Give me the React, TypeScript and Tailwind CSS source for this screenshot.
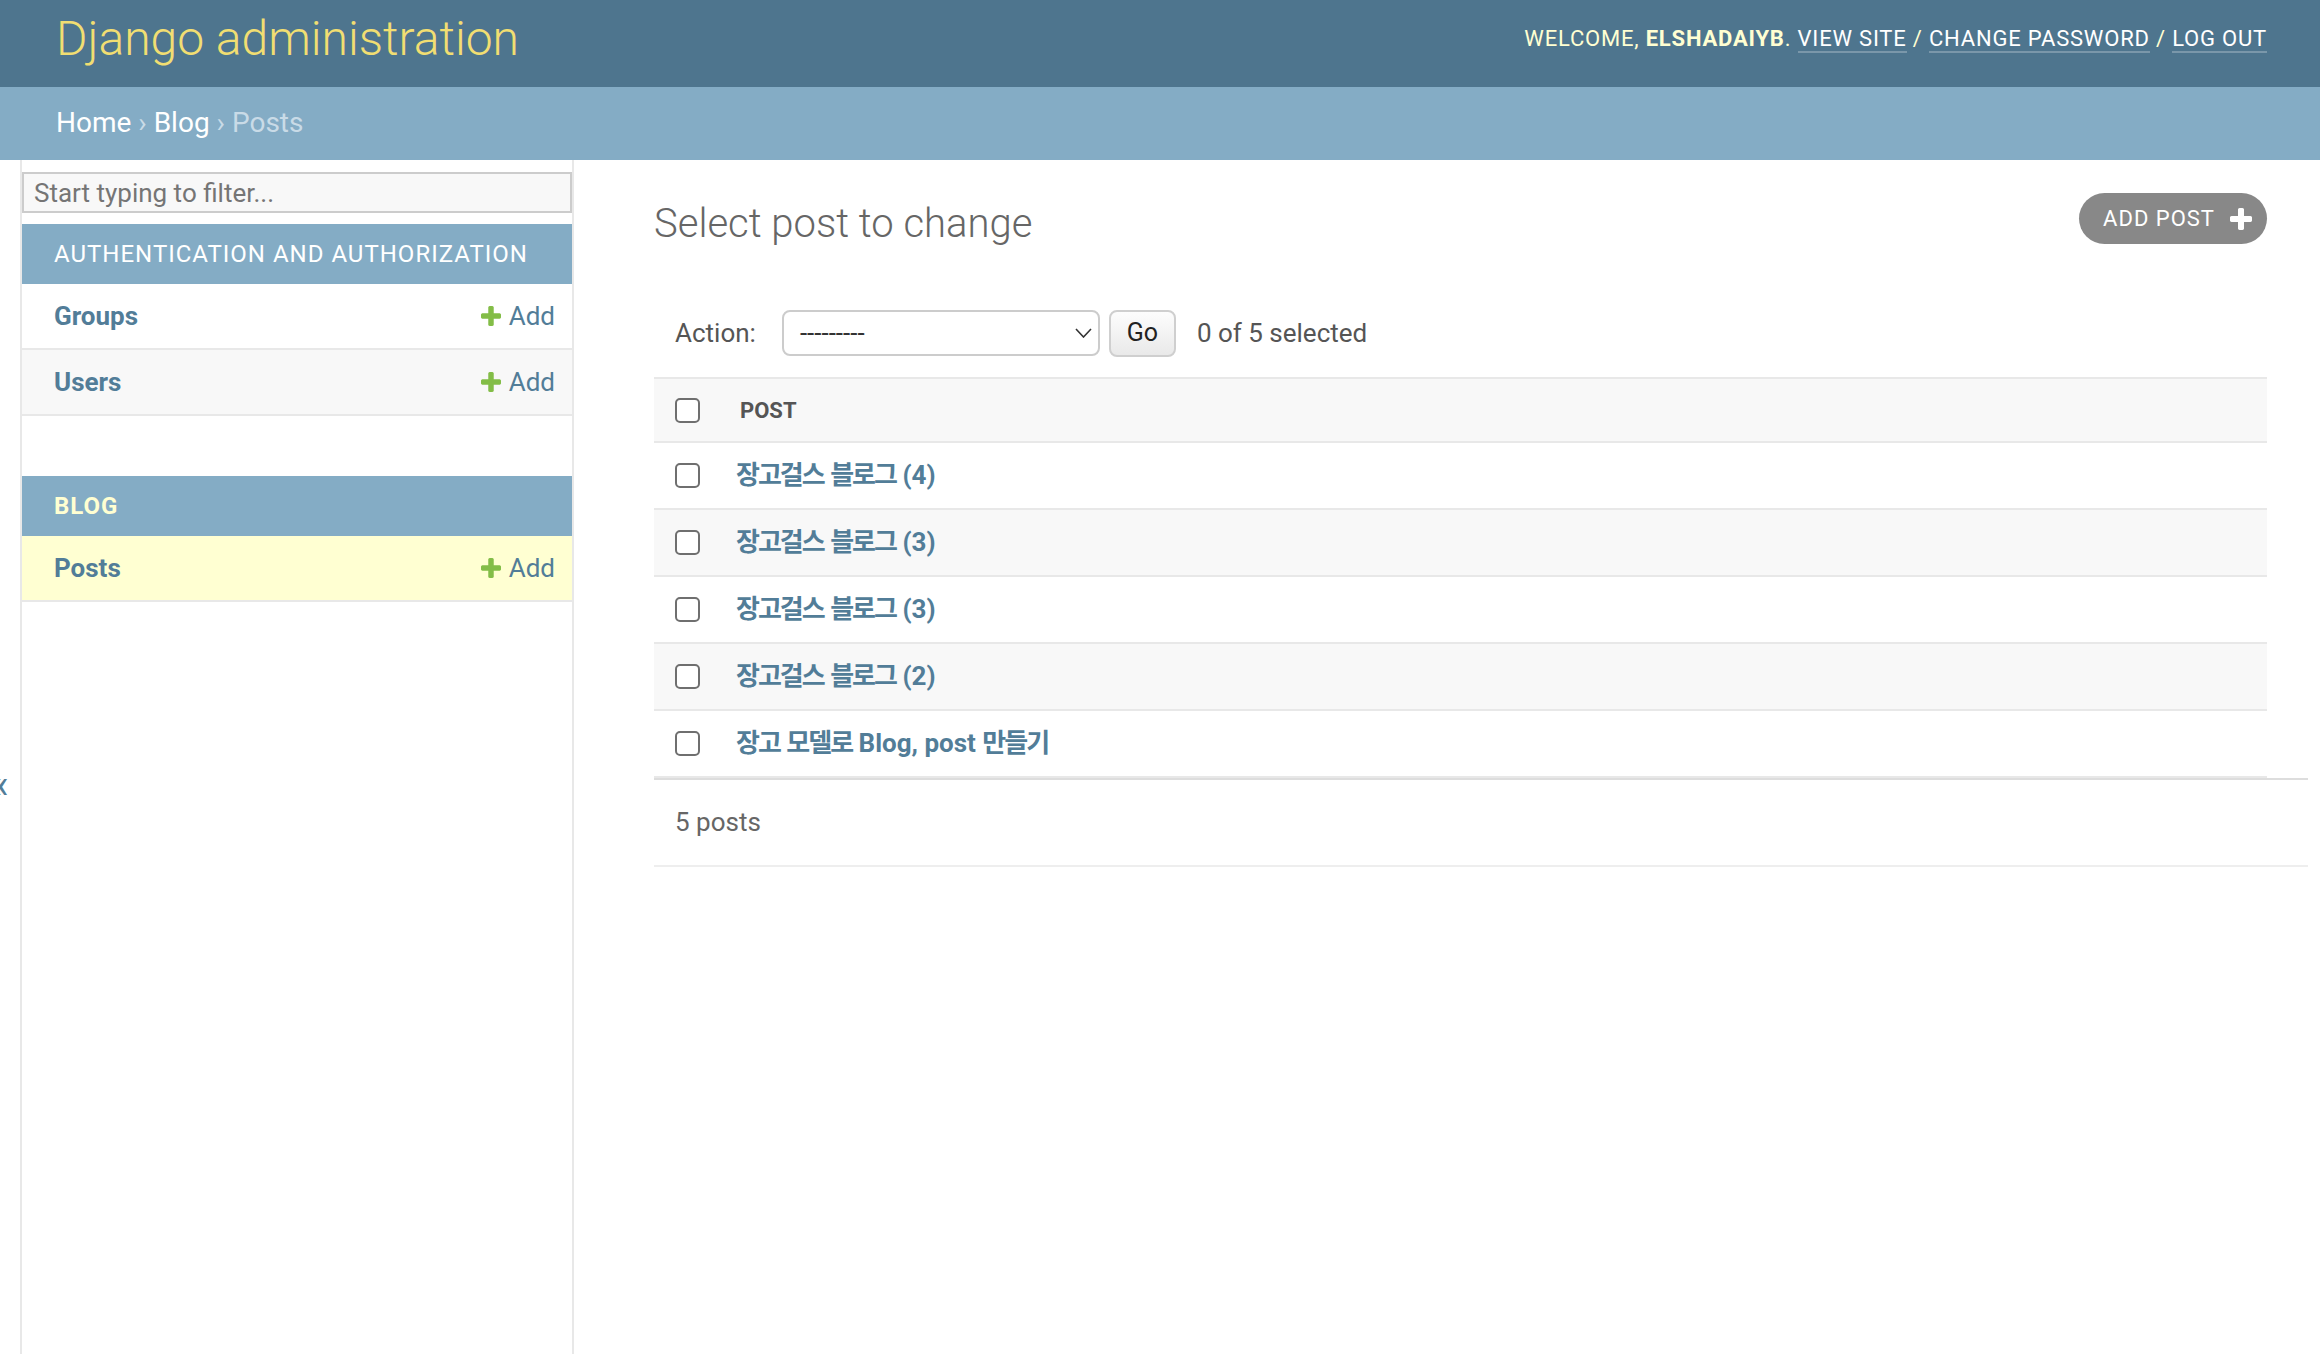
import React from 'react';

// font-awesome style plus used by django admin (addlink / tooltag-add)
const PLUS_D =
  'M1600 736v192q0 40-28 68t-68 28h-416v416q0 40-28 68t-68 28h-192q-40 0-68-28t-28-68v-416h-416q-40 0-68-28t-28-68v-192q0-40 28-68t68-28h416v-416q0-40 28-68t68-28h192q40 0 68 28t28 68v416h416q40 0 68 28t28 68z';

const Plus = ({ className, fill }: { className: string; fill: string }) => (
  <svg className={className} viewBox="192 128 1408 1408">
    <path fill={fill} d={PLUS_D} />
  </svg>
);

// hangul in the reference is narrower than Noto CJK, tighten it a bit
const ko = (s: string) =>
  s.split(/([\uac00-\ud7a3]+)/).map((p, i) =>
    /[\uac00-\ud7a3]/.test(p) ? (
      <span key={i} className="tracking-[-2px]">{p}</span>
    ) : (
      <React.Fragment key={i}>{p}</React.Fragment>
    )
  );

const Check = () => (
  <input
    type="checkbox"
    className="appearance-none w-[25px] h-[25px] shrink-0 border-2 border-[#6f6f6f] rounded-[5px] bg-white"
  />
);

const SideRow = ({ name, bg }: { name: string; bg: string }) => (
  <div className={`h-[66px] border-b-2 border-[#e8e8e8] flex items-center justify-between pl-[32px] pr-[17px] text-[26px] ${bg}`}>
    <a className="font-bold text-[#527d98]">{name}</a>
    <a className="flex items-center gap-[8px] text-[#527d98]">
      <Plus className="w-[20px] h-[20px]" fill="#83bd47" />
      Add
    </a>
  </div>
);

const posts = [
  '장고걸스 블로그 (4)',
  '장고걸스 블로그 (3)',
  '장고걸스 블로그 (3)',
  '장고걸스 블로그 (2)',
  '장고 모델로 Blog, post 만들기',
];

export default function App() {
  return (
    <div className="h-[1354px] flex flex-col bg-white text-[#333] font-[Roboto,'Noto_Sans_CJK_KR',sans-serif] overflow-hidden">
      {/* header */}
      <header className="h-[87px] shrink-0 bg-[#4e758e] flex justify-between pl-[56px] pr-[53px]">
        <div className="mt-[15px] text-[48px] leading-none font-light text-[#f1de72]">Django administration</div>
        <div className="mt-[28px] text-[22px] leading-none tracking-[0.8px] uppercase text-[#ffffd2]">
          Welcome, <strong className="font-bold">elshadaiyb</strong>.{' '}
          <a className="text-white border-b-2 border-white/25">View site</a> /{' '}
          <a className="text-white border-b-2 border-white/25">Change password</a> /{' '}
          <a className="text-white border-b-2 border-white/25">Log out</a>
        </div>
      </header>

      {/* breadcrumbs */}
      <div className="h-[73px] shrink-0 bg-[#84acc5] pl-[56px] pt-[22px] text-[28px] leading-none text-[#c9dbe7]">
        <a className="text-white">Home</a> › <a className="text-white">Blog</a> › Posts
      </div>

      <div className="flex-1 flex min-h-0">
        {/* sidebar toggle */}
        <div className="w-[22px] shrink-0 border-r-2 border-[#e8e8e8] overflow-hidden">
          <div className="pt-[605px] -ml-[10px] text-[40px] leading-none text-[#527d98]">«</div>
        </div>

        {/* nav sidebar */}
        <nav className="w-[552px] shrink-0 border-r-2 border-[#e8e8e8]">
          <input
            placeholder="Start typing to filter..."
            className="mt-[12px] block w-full h-[41px] border-2 border-[#ccc] bg-[#f8f8f8] pl-[10px] text-[26px] text-[#333] placeholder:text-[#757575] outline-none"
          />
          <div className="mt-[11px]">
            <div className="h-[60px] bg-[#84acc5] flex items-center pl-[32px] text-[24px] tracking-[1px] uppercase text-white">
              Authentication and Authorization
            </div>
            <SideRow name="Groups" bg="bg-white" />
            <SideRow name="Users" bg="bg-[#f8f8f8]" />
          </div>
          <div className="mt-[60px]">
            <div className="h-[60px] bg-[#84acc5] flex items-center pl-[32px] text-[24px] tracking-[1px] uppercase font-bold text-[#ffffd2]">
              Blog
            </div>
            <SideRow name="Posts" bg="bg-[#ffffd2]" />
          </div>
        </nav>

        {/* content */}
        <main className="flex-1 min-w-0 pt-[33px] pl-[80px] pr-[53px]">
          <div className="flex justify-between items-start">
            <h1 className="mt-[11px] text-[40px] leading-none font-light text-[#666]">Select post to change</h1>
            <a className="h-[51px] rounded-full bg-[#888] text-white flex items-center pl-[24px] pr-[15px] gap-[15px] text-[22px] tracking-[1px] uppercase">
              Add post
              <Plus className="w-[22px] h-[22px]" fill="#fff" />
            </a>
          </div>

          <div className="mt-[45px] h-[88px] px-[21px] flex items-center text-[26px] text-[#555]">
            <span>Action:</span>
            <div className="ml-[26px] w-[318px] h-[46px] border-2 border-[#ccc] rounded-[8px] flex items-center justify-between pl-[16px] pr-[6px] text-[#333] bg-white">
              <span>---------</span>
              <svg className="w-[17px] h-[10px]" viewBox="0 0 17 10" fill="none">
                <path d="M1 1l7.5 8L16 1" stroke="#333" strokeWidth="1.6" />
              </svg>
            </div>
            <button className="ml-[9px] w-[67px] h-[47px] border-2 border-[#cfcfcf] rounded-[8px] bg-linear-to-b from-[#fdfdfd] to-[#e9e9e9] text-[25px] text-[#222]">
              Go
            </button>
            <span className="ml-[21px]">0 of 5 selected</span>
          </div>

          <div className="border-t-2 border-[#e8e8e8]">
            <div className="h-[64px] bg-[#f8f8f8] border-b-2 border-[#e8e8e8] flex items-center pl-[21px]">
              <Check />
              <span className="ml-[40px] text-[22px] font-bold text-[#555]">POST</span>
            </div>
            {posts.map((p, i) => (
              <div
                key={i}
                className={`h-[67px] border-b-2 border-[#e8e8e8] flex items-center pl-[21px] ${i % 2 ? 'bg-[#f8f8f8]' : 'bg-white'}`}
              >
                <Check />
                <a className="ml-[36px] text-[26px] font-bold text-[#527d98]">{ko(p)}</a>
              </div>
            ))}
          </div>

          <div className="-mr-[41px] h-[89px] border-t-2 border-[#ddd] border-b-2 border-b-[#eee] flex items-center pl-[21px] text-[26px] text-[#666]">
            5 posts
          </div>
        </main>
      </div>
    </div>
  );
}
